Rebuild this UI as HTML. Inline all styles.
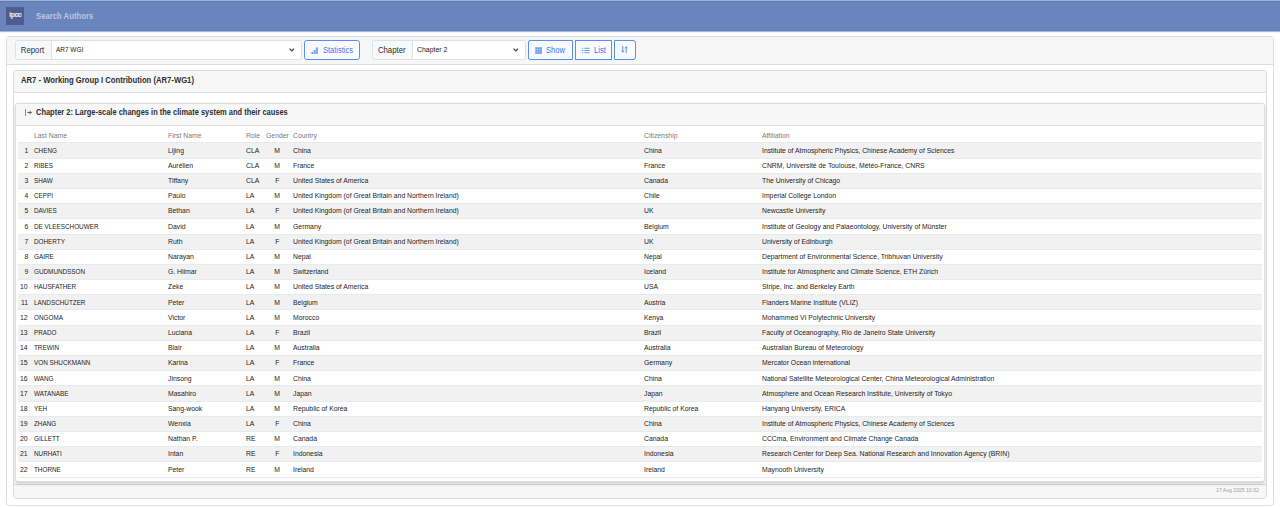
<!DOCTYPE html>
<html lang="en">
<head>
<meta charset="utf-8">
<title>Search Authors</title>
<style>
*{box-sizing:border-box;margin:0;padding:0}
html,body{width:1280px;height:508px;overflow:hidden;background:#fff}
body{font-family:"Liberation Sans",sans-serif;color:#212529;position:relative}
.nav{position:absolute;left:0;top:0;width:1280px;height:31px;background:#6a85bc;border-top:1px solid #a0b2d6;border-bottom:1px solid #6380b8;box-shadow:inset 0 1px 0 #5b7ab6,0 1px 0 #a9b8d9,0 1px 1px rgba(90,115,170,.35)}
.logo{position:absolute;left:6px;top:6px;width:18px;height:18px;background:#4c5d8e;color:#e3e7f2;font-size:7.2px;font-weight:bold;text-align:center;line-height:16.6px;letter-spacing:-.65px;-webkit-text-stroke:.12px #e3e7f2;text-indent:.4px}
.brand{position:absolute;left:36px;top:9px;font-size:8.3px;font-weight:bold;color:#b9c6e6;line-height:12px;white-space:nowrap;transform:scaleX(.93);transform-origin:0 50%}
.card{position:absolute;border:1px solid #dedede;border-radius:3px;background:#fff}
.hd{position:absolute;left:0;top:0;right:0;background:#f7f7f7;border-bottom:1px solid #dedede;border-radius:2px 2px 0 0}
.c1{left:6px;top:35.5px;width:1268px;height:470.5px}
.c1 .hd{height:28.5px}
.c2{left:13px;top:70px;width:1254px;height:429.4px}
.c2 .hd{height:21.5px}
.c2 .ft{position:absolute;left:0;right:0;bottom:0;height:14.4px;background:#f7f7f7;border-top:1px solid #dedede;border-radius:0 0 2px 2px}
.c3{left:15px;top:103px;width:1250px;height:379px;box-shadow:0 1.5px 3.5px rgba(0,0,0,.2)}
.c3 .hd{height:22px}
.title{position:absolute;top:0;font-weight:bold;font-size:8.3px;line-height:20px;color:#2b2f33;white-space:nowrap;transform-origin:0 50%}
.ig{position:absolute;top:3.5px;height:19.5px;border:1px solid #dde0e4;border-radius:2.5px;background:#fff}
.ig .lb{position:absolute;left:0;top:0;bottom:0;background:#f7f8f9;border-right:1px solid #dde0e4;border-radius:2px 0 0 2px;font-size:8.3px;line-height:19.3px;text-align:center;color:#2b2f33}
.ig .lb b{font-weight:normal;display:inline-block;transform:scaleX(.94);position:relative}
.ig .val{position:absolute;top:0;line-height:17.7px;color:#222;white-space:nowrap}
.chev{position:absolute;top:7px;width:5.6px;height:3.8px;overflow:visible}
.btn{position:absolute;top:3.3px;height:20.2px;border:1px solid #578ff4;border-radius:2.5px;background:#fafbff;color:#3a78ee;font-size:8.3px;line-height:19.6px;white-space:nowrap}
.btn span{transform-origin:0 50%}
.btn svg{position:absolute}
.btn span{position:absolute;top:0}
table{position:absolute;left:2px;top:22px;border-collapse:separate;border-spacing:0;table-layout:fixed;width:1244px;font-size:7.7px;color:#242424}
th{font-weight:normal;color:#7a7a7a;text-align:left;height:17.4px;padding:2.5px 0 0 0;white-space:nowrap;line-height:13.4px;border-bottom:1.3px solid #e6eaec}
td{height:15.19px;padding:.3px 0 0 0;white-space:nowrap;border-bottom:1px solid #e6ebed;line-height:13.89px;overflow:visible}
tbody tr:nth-child(odd) td{background:#f1f1f1}
td.n{text-align:right;padding-right:5.7px}
td.n i{transform-origin:100% 50%}
td i,th i{font-style:normal;display:inline-block;transform:scaleX(.89);transform-origin:0 50%}
td.ln i{transform:scaleX(.825)}
td.ge{text-align:center}
td.ge i{transform-origin:50% 50%}
th.ge{padding-left:.5px}
td.co,th.co{padding-left:3.5px}
td.af i{transform:scaleX(.888)}
.sx{display:inline-block;transform-origin:0 50%;white-space:nowrap}
.stamp{position:absolute;right:7px;top:.6px;font-size:5.7px;color:#989ea6;line-height:8px;white-space:nowrap;transform:scaleX(.894);transform-origin:100% 50%}
</style>
</head>
<body>
<div class="nav">
  <div class="logo">ipcc</div>
  <div class="brand">Search Authors</div>
</div>
<div class="card c1">
  <div class="hd">
    <div class="ig" style="left:8px;width:287px">
      <div class="lb" style="width:36.4px"><b style="left:-1.2px">Report</b></div>
      <div class="val sx" style="left:40px;font-size:7.7px;transform:scaleX(.84)">AR7 WGI</div>
      <svg class="chev" style="left:273px" viewBox="0 0 6 4"><path d="M.6.7 3 3.1 5.4.7" fill="none" stroke="#3a3a3a" stroke-width="1.25"/></svg>
    </div>
    <div class="btn" style="left:297px;width:56px">
      <svg style="left:5.7px;top:6px" width="7.4" height="7.4" viewBox="0 0 16 16"><path d="M1.6 11.6h2.8v3H1.6zM6.6 7.6h2.8v7H6.6zM11.6 1.8h2.8v12.8h-2.8z" stroke="#4f8af3" stroke-width="1.5" fill="#bcd2fb"/></svg>
      <span style="left:18px;transform:scaleX(.903)">Statistics</span>
    </div>
    <div class="ig" style="left:364.5px;width:154.5px">
      <div class="lb" style="width:40.5px"><b>Chapter</b></div>
      <div class="val sx" style="left:44.6px;font-size:7.7px;transform:scaleX(.896)">Chapter 2</div>
      <svg class="chev" style="left:140px" viewBox="0 0 6 4"><path d="M.6.7 3 3.1 5.4.7" fill="none" stroke="#3a3a3a" stroke-width="1.25"/></svg>
    </div>
    <div class="btn" style="left:520.8px;width:45px;border-radius:2px 0 0 2px">
      <svg style="left:6.2px;top:6.2px" width="7.4" height="7.4" viewBox="0 0 16 16"><path d="M1.3 1.3h3.4v3.4h-3.4zM6.3 1.3h3.4v3.4h-3.4zM11.3 1.3h3.4v3.4h-3.4zM1.3 6.3h3.4v3.4h-3.4zM6.3 6.3h3.4v3.4h-3.4zM11.3 6.3h3.4v3.4h-3.4zM1.3 11.3h3.4v3.4h-3.4zM6.3 11.3h3.4v3.4h-3.4zM11.3 11.3h3.4v3.4h-3.4z" stroke="#4f8af3" stroke-width="1.3" fill="#9dbdf9"/></svg>
      <span style="left:17.7px;transform:scaleX(.915)">Show</span>
    </div>
    <div class="btn" style="left:567.6px;width:37.4px;border-radius:0">
      <svg style="left:6.2px;top:6px" width="8" height="7" viewBox="0 0 8 7"><path d="M2.3 1.3h5.2M2.3 3.5h5.2M2.3 5.7h5.2M.1 1.3h1.1M.1 3.5h1.1M.1 5.7h1.1" stroke="#4f8af3" stroke-width=".85" fill="none"/></svg>
      <span style="left:18px;transform:scaleX(.92)">List</span>
    </div>
    <div class="btn" style="left:607px;width:21.6px;border-radius:0 3px 3px 0">
      <svg style="left:6.2px;top:5.5px" width="7" height="7" viewBox="0 0 7 7"><path d="M1.8 0v6M.4 4.8 1.8 6.2l1.4-1.4M5.2 7V.8M3.8 2.2 5.2.8l1.4 1.4" stroke="#4a86f2" stroke-width=".9" fill="none"/></svg>
    </div>
  </div>
</div>
<div class="card c2">
  <div class="hd"><div class="title" style="left:6.8px;line-height:18.2px;transform:scaleX(.925)">AR7 - Working Group I Contribution (AR7-WG1)</div></div>
  <div class="ft"><div class="stamp">17 Aug 2025 10:32</div></div>
</div>
<div class="card c3">
  <div class="hd">
    <svg style="position:absolute;left:9px;top:4.8px" width="7" height="7" viewBox="0 0 7 7"><path d="M.5 0v7" stroke="#8d6680" stroke-width=".8" fill="none"/><path d="M2.3 3.5h3.9M4.5 1.8 6.2 3.5 4.5 5.2" stroke="#3f3f4a" stroke-width=".85" fill="none"/></svg>
    <div class="title" style="left:20px;line-height:17.4px;transform:scaleX(.901)">Chapter 2: Large-scale changes in the climate system and their causes</div>
  </div>
  <table>
    <colgroup><col style="width:15.5px"><col style="width:134px"><col style="width:78px"><col style="width:20px"><col style="width:24px"><col style="width:354.2px"><col style="width:118.1px"><col></colgroup>
    <thead><tr><th></th><th><i>Last Name</i></th><th><i>First Name</i></th><th><i>Role</i></th><th class="ge"><i>Gender</i></th><th class="co"><i>Country</i></th><th><i>Citizenship</i></th><th><i>Affiliation</i></th></tr></thead>
    <tbody>
<tr><td class="n"><i>1</i></td><td class="ln"><i>CHENG</i></td><td class="fn"><i>Lijing</i></td><td class="ro"><i>CLA</i></td><td class="ge"><i>M</i></td><td class="co"><i>China</i></td><td class="ci"><i>China</i></td><td class="af"><i>Institute of Atmospheric Physics, Chinese Academy of Sciences</i></td></tr>
<tr><td class="n"><i>2</i></td><td class="ln"><i>RIBES</i></td><td class="fn"><i>Aurélien</i></td><td class="ro"><i>CLA</i></td><td class="ge"><i>M</i></td><td class="co"><i>France</i></td><td class="ci"><i>France</i></td><td class="af"><i>CNRM, Université de Toulouse, Météo-France, CNRS</i></td></tr>
<tr><td class="n"><i>3</i></td><td class="ln"><i>SHAW</i></td><td class="fn"><i>Tiffany</i></td><td class="ro"><i>CLA</i></td><td class="ge"><i>F</i></td><td class="co"><i>United States of America</i></td><td class="ci"><i>Canada</i></td><td class="af"><i>The University of Chicago</i></td></tr>
<tr><td class="n"><i>4</i></td><td class="ln"><i>CEPPI</i></td><td class="fn"><i>Paulo</i></td><td class="ro"><i>LA</i></td><td class="ge"><i>M</i></td><td class="co"><i>United Kingdom (of Great Britain and Northern Ireland)</i></td><td class="ci"><i>Chile</i></td><td class="af"><i>Imperial College London</i></td></tr>
<tr><td class="n"><i>5</i></td><td class="ln"><i>DAVIES</i></td><td class="fn"><i>Bethan</i></td><td class="ro"><i>LA</i></td><td class="ge"><i>F</i></td><td class="co"><i>United Kingdom (of Great Britain and Northern Ireland)</i></td><td class="ci"><i>UK</i></td><td class="af"><i>Newcastle University</i></td></tr>
<tr><td class="n"><i>6</i></td><td class="ln"><i>DE VLEESCHOUWER</i></td><td class="fn"><i>David</i></td><td class="ro"><i>LA</i></td><td class="ge"><i>M</i></td><td class="co"><i>Germany</i></td><td class="ci"><i>Belgium</i></td><td class="af"><i>Institute of Geology and Palaeontology, University of Münster</i></td></tr>
<tr><td class="n"><i>7</i></td><td class="ln"><i>DOHERTY</i></td><td class="fn"><i>Ruth</i></td><td class="ro"><i>LA</i></td><td class="ge"><i>F</i></td><td class="co"><i>United Kingdom (of Great Britain and Northern Ireland)</i></td><td class="ci"><i>UK</i></td><td class="af"><i>University of Edinburgh</i></td></tr>
<tr><td class="n"><i>8</i></td><td class="ln"><i>GAIRE</i></td><td class="fn"><i>Narayan</i></td><td class="ro"><i>LA</i></td><td class="ge"><i>M</i></td><td class="co"><i>Nepal</i></td><td class="ci"><i>Nepal</i></td><td class="af"><i>Department of Environmental Science, Tribhuvan University</i></td></tr>
<tr><td class="n"><i>9</i></td><td class="ln"><i>GUDMUNDSSON</i></td><td class="fn"><i>G. Hilmar</i></td><td class="ro"><i>LA</i></td><td class="ge"><i>M</i></td><td class="co"><i>Switzerland</i></td><td class="ci"><i>Iceland</i></td><td class="af"><i>Institute for Atmospheric and Climate Science, ETH Zürich</i></td></tr>
<tr><td class="n"><i>10</i></td><td class="ln"><i>HAUSFATHER</i></td><td class="fn"><i>Zeke</i></td><td class="ro"><i>LA</i></td><td class="ge"><i>M</i></td><td class="co"><i>United States of America</i></td><td class="ci"><i>USA</i></td><td class="af"><i>Stripe, Inc. and Berkeley Earth</i></td></tr>
<tr><td class="n"><i>11</i></td><td class="ln"><i>LANDSCHÜTZER</i></td><td class="fn"><i>Peter</i></td><td class="ro"><i>LA</i></td><td class="ge"><i>M</i></td><td class="co"><i>Belgium</i></td><td class="ci"><i>Austria</i></td><td class="af"><i>Flanders Marine Institute (VLIZ)</i></td></tr>
<tr><td class="n"><i>12</i></td><td class="ln"><i>ONGOMA</i></td><td class="fn"><i>Victor</i></td><td class="ro"><i>LA</i></td><td class="ge"><i>M</i></td><td class="co"><i>Morocco</i></td><td class="ci"><i>Kenya</i></td><td class="af"><i>Mohammed VI Polytechnic University</i></td></tr>
<tr><td class="n"><i>13</i></td><td class="ln"><i>PRADO</i></td><td class="fn"><i>Luciana</i></td><td class="ro"><i>LA</i></td><td class="ge"><i>F</i></td><td class="co"><i>Brazil</i></td><td class="ci"><i>Brazil</i></td><td class="af"><i>Faculty of Oceanography, Rio de Janeiro State University</i></td></tr>
<tr><td class="n"><i>14</i></td><td class="ln"><i>TREWIN</i></td><td class="fn"><i>Blair</i></td><td class="ro"><i>LA</i></td><td class="ge"><i>M</i></td><td class="co"><i>Australia</i></td><td class="ci"><i>Australia</i></td><td class="af"><i>Australian Bureau of Meteorology</i></td></tr>
<tr><td class="n"><i>15</i></td><td class="ln"><i>VON SHUCKMANN</i></td><td class="fn"><i>Karina</i></td><td class="ro"><i>LA</i></td><td class="ge"><i>F</i></td><td class="co"><i>France</i></td><td class="ci"><i>Germany</i></td><td class="af"><i>Mercator Ocean international</i></td></tr>
<tr><td class="n"><i>16</i></td><td class="ln"><i>WANG</i></td><td class="fn"><i>Jinsong</i></td><td class="ro"><i>LA</i></td><td class="ge"><i>M</i></td><td class="co"><i>China</i></td><td class="ci"><i>China</i></td><td class="af"><i>National Satellite Meteorological Center, China Meteorological Administration</i></td></tr>
<tr><td class="n"><i>17</i></td><td class="ln"><i>WATANABE</i></td><td class="fn"><i>Masahiro</i></td><td class="ro"><i>LA</i></td><td class="ge"><i>M</i></td><td class="co"><i>Japan</i></td><td class="ci"><i>Japan</i></td><td class="af"><i>Atmosphere and Ocean Research Institute, University of Tokyo</i></td></tr>
<tr><td class="n"><i>18</i></td><td class="ln"><i>YEH</i></td><td class="fn"><i>Sang-wook</i></td><td class="ro"><i>LA</i></td><td class="ge"><i>M</i></td><td class="co"><i>Republic of Korea</i></td><td class="ci"><i>Republic of Korea</i></td><td class="af"><i>Hanyang University, ERICA</i></td></tr>
<tr><td class="n"><i>19</i></td><td class="ln"><i>ZHANG</i></td><td class="fn"><i>Wenxia</i></td><td class="ro"><i>LA</i></td><td class="ge"><i>F</i></td><td class="co"><i>China</i></td><td class="ci"><i>China</i></td><td class="af"><i>Institute of Atmospheric Physics, Chinese Academy of Sciences</i></td></tr>
<tr><td class="n"><i>20</i></td><td class="ln"><i>GILLETT</i></td><td class="fn"><i>Nathan P.</i></td><td class="ro"><i>RE</i></td><td class="ge"><i>M</i></td><td class="co"><i>Canada</i></td><td class="ci"><i>Canada</i></td><td class="af"><i>CCCma, Environment and Climate Change Canada</i></td></tr>
<tr><td class="n"><i>21</i></td><td class="ln"><i>NURHATI</i></td><td class="fn"><i>Intan</i></td><td class="ro"><i>RE</i></td><td class="ge"><i>F</i></td><td class="co"><i>Indonesia</i></td><td class="ci"><i>Indonesia</i></td><td class="af"><i>Research Center for Deep Sea. National Research and Innovation Agency (BRIN)</i></td></tr>
<tr><td class="n"><i>22</i></td><td class="ln"><i>THORNE</i></td><td class="fn"><i>Peter</i></td><td class="ro"><i>RE</i></td><td class="ge"><i>M</i></td><td class="co"><i>Ireland</i></td><td class="ci"><i>Ireland</i></td><td class="af"><i>Maynooth University</i></td></tr>
    </tbody>
  </table>
</div>
</body>
</html>
